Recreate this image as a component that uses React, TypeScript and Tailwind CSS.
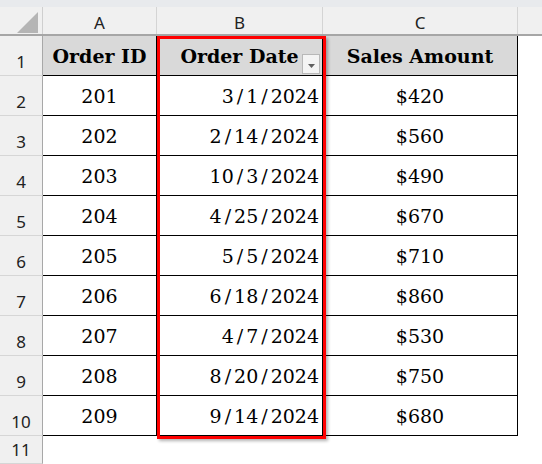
import React from 'react';

const rows = [
  ['201', '3/1/2024', '$420'],
  ['202', '2/14/2024', '$560'],
  ['203', '10/3/2024', '$490'],
  ['204', '4/25/2024', '$670'],
  ['205', '5/5/2024', '$710'],
  ['206', '6/18/2024', '$860'],
  ['207', '4/7/2024', '$530'],
  ['208', '8/20/2024', '$750'],
  ['209', '9/14/2024', '$680'],
];

// Cambria has wide slashes, DejaVu Serif doesn't — pad them a bit
function DateText({ value }: { value: string }) {
  const parts = value.split('/');
  return (
    <span>
      {parts.map((p, i) => (
        <React.Fragment key={i}>
          {i > 0 && <span className="px-[3px]">/</span>}
          {p}
        </React.Fragment>
      ))}
    </span>
  );
}

function RowHead({ n }: { n: number }) {
  return (
    <div className="w-[43px] shrink-0 h-full bg-[#f0f0f0] border-r border-r-[#a8a8a8] border-b border-b-[#d6d6d6] flex items-end justify-center pb-[5px] leading-none text-[17px] text-[#222] font-['Noto_Sans',sans-serif]">
      {n}
    </div>
  );
}

export default function App() {
  return (
    <div className="relative w-[542px] h-[464px] overflow-hidden bg-white font-['DejaVu_Serif',serif] text-[19px] text-black">
      {/* top strip */}
      <div className="h-[7px] bg-[#e8eaed]" />

      {/* column letters */}
      <div className="flex h-[29px] bg-[#f0f0f0] border-b-2 border-b-[#a6a6a6] font-['Noto_Sans',sans-serif] text-[17px] text-[#222] leading-none">
        <div className="w-[43px] shrink-0 border-r border-r-[#cfcfcf] flex items-end justify-end pr-[4px] pb-[1px]">
          <svg width="21" height="21" viewBox="0 0 21 21">
            <polygon points="0,21 21,0 21,21" fill="#b5b5b5" />
          </svg>
        </div>
        <div className="w-[114px] shrink-0 border-r border-r-[#d4d4d4] flex items-end justify-center pb-[3px]">A</div>
        <div className="w-[166px] shrink-0 border-r border-r-[#d4d4d4] flex items-end justify-center pb-[3px]">B</div>
        <div className="w-[195px] shrink-0 border-r border-r-[#d4d4d4] flex items-end justify-center pb-[3px]">C</div>
        <div className="flex-1" />
      </div>

      {/* header row */}
      <div className="flex h-[40px]">
        <RowHead n={1} />
        <div className="w-[114px] shrink-0 bg-[#d9d9d9] border-b border-r border-black flex items-center justify-center pt-[1px] font-bold leading-none">
          Order ID
        </div>
        <div className="relative w-[166px] shrink-0 bg-[#d9d9d9] border-b border-r border-black flex items-center justify-center pt-[1px] font-bold leading-none">
          Order Date
          <div className="absolute right-[2px] bottom-[1px] w-[18px] h-[20px] bg-[#f4f4f4] border border-[#b8b8b8] flex items-end justify-center pb-[5px]">
            <svg width="7" height="4" viewBox="0 0 7 4">
              <polygon points="0,0 7,0 3.5,4" fill="#606060" />
            </svg>
          </div>
        </div>
        <div className="w-[195px] shrink-0 bg-[#d9d9d9] border-b border-r border-black flex items-center justify-center pt-[1px] font-bold leading-none">
          Sales Amount
        </div>
      </div>

      {rows.map((r, i) => (
        <div key={r[0]} className="flex h-[40px] leading-none">
          <RowHead n={i + 2} />
          <div className="w-[114px] shrink-0 border-b border-r border-black flex items-center justify-center pt-[1px]">
            {r[0]}
          </div>
          <div className="w-[166px] shrink-0 border-b border-r border-black flex items-center justify-end pr-[3px] pt-[1px]">
            <DateText value={r[1]} />
          </div>
          <div className="w-[195px] shrink-0 border-b border-r border-black flex items-center justify-center pt-[1px]">
            {r[2]}
          </div>
        </div>
      ))}

      <div className="flex h-[28px]">
        <RowHead n={11} />
      </div>

      {/* selection outline on column B */}
      <div className="absolute left-[157px] top-[36px] w-[169px] h-[403px] border-[3px] border-[#ff0000] shadow-[2px_2px_3px_rgba(0,0,0,0.3)] pointer-events-none" />
    </div>
  );
}
